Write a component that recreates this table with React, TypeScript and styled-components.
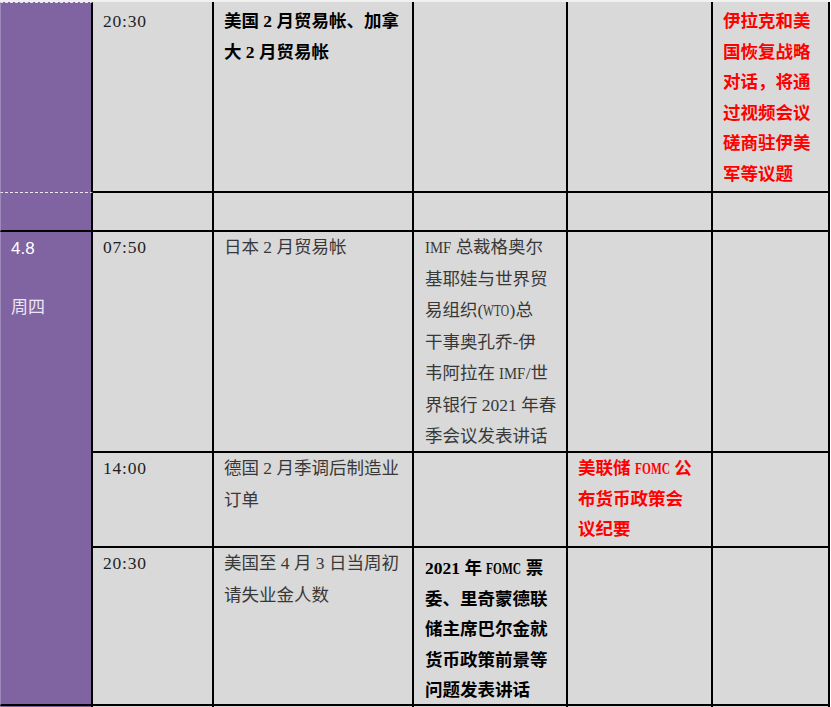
import React from 'react';
import styled, { createGlobalStyle, css } from 'styled-components';

const GlobalStyle = createGlobalStyle`
  html, body { margin: 0; padding: 0; background: #fff; }
  body {
    width: 831px;
    height: 707px;
    overflow: hidden;
    font-family: "Liberation Serif", "Noto Sans CJK SC", serif;
  }
`;

const Sheet = styled.div`
  display: grid;
  grid-template-columns: 93px 121px 200px 154px 145px 117px;
  grid-template-rows: 191px 39px 221px 95px 158px 60px;
  width: 830px;
  border-top: 2px solid #f1f1f1;
`;

type Tone = 'plain' | 'bold' | 'red';

const Cell = styled.div<{ $pt: number; $pl: number }>`
  box-sizing: border-box;
  background: #d9d9d9;
  border-right: 2px solid #000;
  border-bottom: 2px solid #000;
  padding: ${(p) => p.$pt}px 4px 0 ${(p) => p.$pl}px;
  overflow: hidden;
`;

const DayCell = styled.div<{ $row: string; $first?: boolean }>`
  grid-column: 1;
  grid-row: ${(p) => p.$row};
  box-sizing: border-box;
  background: #8064a2;
  border-left: 1px solid #9d8abb;
  border-right: 2px solid #000;
  border-bottom: 2px solid #000;
  padding: 5px 0 0 10px;
  ${(p) =>
    p.$first &&
    css`
      border-top: 1px dashed rgba(255, 255, 255, 0.8);
      border-bottom: 1px dashed rgba(255, 255, 255, 0.85);
    `}
`;

const Para = styled.div<{ $tone: Tone }>`
  font-family: "Liberation Serif", "Noto Sans CJK SC", serif;
  font-size: 17.5px;
  white-space: nowrap;
  ${(p) =>
    p.$tone === 'plain'
      ? css`
          color: #383838;
          font-weight: 400;
          line-height: 31.5px;
        `
      : css`
          color: ${p.$tone === 'red' ? '#ff0000' : '#000000'};
          font-weight: 700;
          line-height: 30.5px;
        `}
`;

const Line = styled.span`
  display: block;
`;

/* Half-width latin run (as in the Song typeface of the source sheet) */
const Abbr = styled.span<{ $chars: number }>`
  display: inline-block;
  width: ${(p) => p.$chars * 0.5}em;
  white-space: nowrap;
`;

const AbbrInk = styled.span<{ $scale: number }>`
  display: inline-block;
  transform: scaleX(${(p) => p.$scale});
  transform-origin: left center;
`;

const Time = styled.div`
  font-family: "Liberation Serif", serif;
  font-size: 17.5px;
  line-height: 31.5px;
  letter-spacing: 0.8px;
  color: #1e1e1e;
`;

const DateNum = styled.div`
  font-family: "Liberation Sans", Arial, sans-serif;
  font-size: 17px;
  line-height: 24px;
  color: #ffffff;
`;

const Weekday = styled.div`
  font-family: "Noto Sans CJK SC", sans-serif;
  font-size: 17px;
  line-height: 24px;
  color: #ece6f4;
  margin-top: 33px;
`;

/* advance widths (em) of Times-metric capitals */
const capRegular: Record<string, number> = { I: 0.333, M: 0.889, F: 0.556, W: 0.944, T: 0.611, O: 0.722, C: 0.667 };
const capBold: Record<string, number> = { I: 0.389, M: 0.944, F: 0.611, W: 1.0, T: 0.667, O: 0.778, C: 0.722 };

function renderLine(text: string, bold: boolean) {
  const parts = text.split(/([A-Z]{2,})/);
  const table = bold ? capBold : capRegular;
  return parts.map((part, i) => {
    if (/^[A-Z]{2,}$/.test(part)) {
      const natural = part.split('').reduce((s, c) => s + (table[c] ?? 0.7), 0);
      const scale = (part.length * 0.5) / natural;
      return (
        <Abbr key={i} $chars={part.length}>
          <AbbrInk $scale={scale}>{part}</AbbrInk>
        </Abbr>
      );
    }
    return <React.Fragment key={i}>{part}</React.Fragment>;
  });
}

type Entry = { tone: Tone; lines: string[]; pt?: number } | null;

type Row = {
  key: string;
  pt: number;
  time: string;
  entries: Entry[];
};

const rows: Row[] = [
  {
    key: 'a',
    pt: 4,
    time: '20:30',
    entries: [
      { tone: 'bold', lines: ['美国 2 月贸易帐、加拿', '大 2 月贸易帐'] },
      null,
      null,
      {
        tone: 'red',
        lines: ['伊拉克和美', '国恢复战略', '对话，将通', '过视频会议', '磋商驻伊美', '军等议题'],
      },
    ],
  },
  { key: 'b', pt: 0, time: '', entries: [null, null, null, null] },
  {
    key: 'c',
    pt: 0,
    time: '07:50',
    entries: [
      { tone: 'plain', lines: ['日本 2 月贸易帐'] },
      {
        tone: 'plain',
        lines: [
          'IMF 总裁格奥尔',
          '基耶娃与世界贸',
          '易组织(WTO)总',
          '干事奥孔乔-伊',
          '韦阿拉在 IMF/世',
          '界银行 2021 年春',
          '季会议发表讲话',
        ],
      },
      null,
      null,
    ],
  },
  {
    key: 'd',
    pt: 0,
    time: '14:00',
    entries: [
      { tone: 'plain', lines: ['德国 2 月季调后制造业', '订单'] },
      null,
      { tone: 'red', lines: ['美联储 FOMC 公', '布货币政策会', '议纪要'] },
      null,
    ],
  },
  {
    key: 'e',
    pt: 0,
    time: '20:30',
    entries: [
      { tone: 'plain', lines: ['美国至 4 月 3 日当周初', '请失业金人数'] },
      {
        tone: 'bold',
        pt: 5,
        lines: ['2021 年 FOMC 票', '委、里奇蒙德联', '储主席巴尔金就', '货币政策前景等', '问题发表讲话'],
      },
      null,
      null,
    ],
  },
  { key: 'f', pt: 0, time: '', entries: [null, null, null, null] },
];

const entryPad = [10, 11, 10, 10];

export default function App() {
  return (
    <>
      <GlobalStyle />
      <Sheet>
        <DayCell $row="1" $first />
        <DayCell $row="2" />
        <DayCell $row="3 / span 3">
          <DateNum>4.8</DateNum>
          <Weekday>周四</Weekday>
        </DayCell>
        <DayCell $row="6" />
        {rows.map((row) => (
          <React.Fragment key={row.key}>
            <Cell $pt={row.pt} $pl={10}>
              {row.time && <Time>{row.time}</Time>}
            </Cell>
            {row.entries.map((entry, i) => (
              <Cell key={i} $pt={row.pt + (entry?.pt ?? 0)} $pl={entryPad[i]}>
                {entry && (
                  <Para $tone={entry.tone}>
                    {entry.lines.map((l, j) => (
                      <Line key={j}>{renderLine(l, entry.tone !== 'plain')}</Line>
                    ))}
                  </Para>
                )}
              </Cell>
            ))}
          </React.Fragment>
        ))}
      </Sheet>
    </>
  );
}
